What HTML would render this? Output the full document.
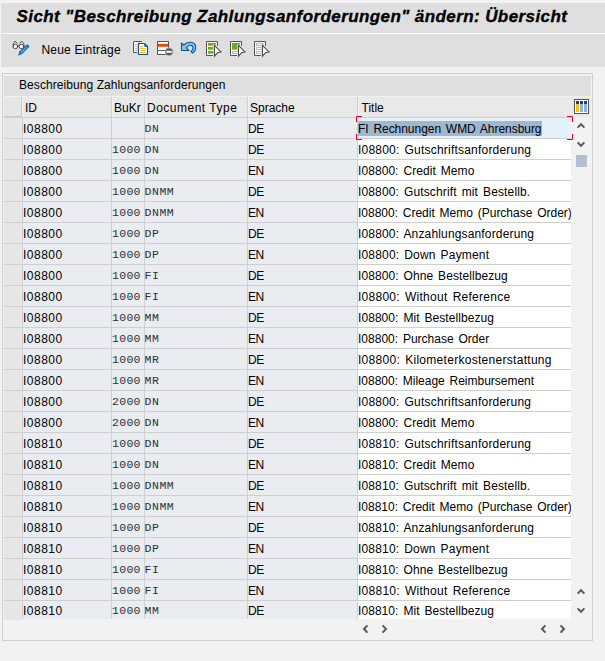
<!DOCTYPE html>
<html lang="de"><head><meta charset="utf-8"><title>Sicht "Beschreibung Zahlungsanforderungen" ändern: Übersicht</title>
<style>
html,body{margin:0;padding:0;}
body{width:605px;height:661px;overflow:hidden;background:#f2f2f2;position:relative;font-family:"Liberation Sans",sans-serif;font-size:12px;color:#000;}
.titlebar{position:absolute;left:1px;top:3px;width:604px;height:30px;background:#dfdfdf;}
.title{position:absolute;left:15.5px;top:2px;-webkit-text-stroke:0.35px #000;font:italic bold 17px "Liberation Sans",sans-serif;white-space:nowrap;line-height:24px;letter-spacing:0.41px;}
.toolbar{position:absolute;left:1px;top:33px;width:604px;height:34px;background:#dfdfdf;border-top:1px solid #fafafa;box-sizing:border-box;}
.tbtext{position:absolute;left:40.5px;top:8px;letter-spacing:0.2px;line-height:16px;font-size:12px;white-space:nowrap;}
.panel{position:absolute;left:2px;top:73px;width:591px;height:568px;box-sizing:border-box;border:1px solid #cfcfcf;background:#f2f2f2;}
.phead{position:absolute;left:1px;top:2px;width:587px;height:20px;background:#dfdfdf;}
.phead span{position:absolute;left:15px;letter-spacing:0.07px;top:1px;line-height:16px;font-size:12px;white-space:nowrap;}
.chead{position:absolute;left:1px;top:22px;width:587px;height:21px;background:#e9e9e9;border-top:1px solid #f1f1f1;box-sizing:border-box;}
.hsel{position:absolute;left:0;top:0;width:17px;height:19px;background:#e6e6e6;border-right:1px solid #c9c9c9;border-bottom:1px solid #cbcbcb;box-sizing:content-box;}
.h{position:absolute;top:0;height:20px;border-right:1px solid #cfcfcf;border-left:1px solid #f3f3f3;box-sizing:border-box;}
.h span{position:absolute;left:1px;top:3px;line-height:16px;font-size:12px;white-space:nowrap;}
.h1{left:18px;width:90px;}
.h1 span{left:2px;}
.h2{left:108px;width:33px;}
.h3{left:141px;width:103px;}
.h4{left:244px;width:110px;}
.h5{left:354px;width:215px;border-right:none;}
.grid{position:absolute;left:1px;top:43px;width:567px;height:503px;overflow:hidden;background:#cfcfcf;}
.row{position:absolute;left:0;height:21px;width:568px;}
.c{position:absolute;top:1px;height:20px;box-sizing:border-box;background:#e9edf1;overflow:hidden;}
.c span{position:absolute;left:1px;top:3px;line-height:16px;font-size:12px;white-space:nowrap;}
.sel0{left:0;width:18px;background:#e6e6e6;}
.c1{left:19px;width:88px;}
.c2{left:108px;width:32px;}
.c3{left:141px;width:102px;}
.c4{left:244px;width:109px;}
.c5{left:354px;width:213px;background:#fff;}
.c2 span,.c3 span{font-family:"Liberation Mono",monospace;font-size:11.5px;letter-spacing:0.3px;}
.c2 span{left:0px;}
.c3 span{left:-0.5px;letter-spacing:0.55px;}
.c2 span,.c3 span{color:#303030;}
.c1 span{left:0px;letter-spacing:0.5px;}
.c4 span{left:0px;letter-spacing:-0.4px;}
.c5 span{left:0px;word-spacing:1.5px;}
.h3 span{letter-spacing:0.5px;}
.h5 span{left:2.5px;}
.first .c5{background:#e5f1fa;}
.c5 span.sel{position:static;padding-top:1px;letter-spacing:inherit;background:#a0b7d0;}
.tbicons{position:absolute;left:-1px;top:0px;}
.cfg{position:absolute;left:570px;top:2px;}
.overlay{position:absolute;left:-3px;top:-74px;pointer-events:none;}
.last .c{height:18px;}
.last .c span{top:2px;}
.last .sel0{height:19px;}
.last::after{content:"";position:absolute;left:18px;top:19px;width:560px;height:3px;background:#f2f2f2;}
</style></head>
<body>
<div class="titlebar"><span class="title">Sicht "Beschreibung Zahlungsanforderungen" ändern: Übersicht</span></div>
<div class="toolbar"><svg class="tbicons" width="300" height="33" viewBox="0 34 300 33">
<!-- display/change: glasses + pencil -->
<g fill="none" stroke="#484848" stroke-width="1" stroke-linecap="round" stroke-linejoin="round">
<ellipse cx="15.4" cy="46.5" rx="2.4" ry="2.2" fill="#fff"/>
<ellipse cx="21.4" cy="46.5" rx="2.4" ry="2.2" fill="#fff"/>
<path d="M17.9 45.6 Q18.6 44.7 19.3 45.6"/>
<path d="M13.2 46.2 L13.4 43.6 L15.3 41.1 L16.9 43.2"/>
<path d="M24 46.2 L23.8 43.6 L21.6 41.1 L20 43.2"/>
</g>
<g>
<path d="M18 55.8 L19.3 51.6 L26.6 44.6 Q27.4 44.1 28.2 44.8 L29 45.7 Q29.6 46.5 29 47.3 L21.9 54.3 Z" fill="#1f72b0"/>
<path d="M20.6 52.2 L26.6 46.4 L27.3 47.1 L21.3 52.9 Z" fill="#86b6dd"/>
</g>
<!-- copy -->
<g>
<rect x="133.5" y="41.5" width="8.5" height="11" fill="#fff"/><path d="M142 41.5 H133.5 V52.5 H137" fill="none" stroke="#555" stroke-width="1"/><path d="M138.5 43.5 H144.5 L147.5 46.5 V54.5 H138.5 Z" fill="#dfdfdf" stroke="#dfdfdf" stroke-width="3" stroke-linejoin="round"/>
<path d="M135 44.5h2.2M135 46.5h2.2M135 48.5h2.2M135 50.5h2.2" stroke="#c4c4c4" stroke-width="1"/>
<path d="M138.5 43.5 H144.5 L147.5 46.5 V54.5 H138.5 Z" fill="#fff" stroke="#0b5a94" stroke-width="1.2" stroke-linejoin="round"/>
<path d="M144.3 43.3 L147.8 46.8 H144.3 Z" fill="#0b5a94"/>
<path d="M140.2 46.5h2.8M140.2 48.5h5.6M140.2 50.5h5.6M140.2 52.5h5.6" stroke="#f8c32e" stroke-width="1.1"/>
</g>
<!-- delete -->
<g>
<rect x="157.5" y="41.5" width="11" height="13" fill="#fff" stroke="#555" stroke-width="1"/>
<rect x="158" y="43.8" width="10" height="3" fill="#d9500a"/>
<path d="M158 50.5h10" stroke="#555" stroke-width="1"/>
<circle cx="169" cy="51.8" r="4" fill="#555" stroke="#dfdfdf" stroke-width="0.6"/>
<rect x="166.3" y="50.8" width="5.4" height="2" fill="#fff"/>
</g>
<!-- undo -->
<g>
<path d="M181.5 43 L183.7 45 C186 42.6 189 42 191.4 42.3 C194.3 42.8 195.9 45.2 195.7 48 C195.5 50.4 194.3 52 192.4 53.1 L191 51.5 C192.4 50.4 193.1 49 193 47.6 C192.9 46 191.7 45.2 190.3 45.2 C188.7 45.2 187.5 46.2 186.5 47.9 L189 50.5 L181.5 50.5 Z" fill="#8fbce2" stroke="#0b5a94" stroke-width="1.1" stroke-linejoin="round"/>
</g>
<!-- select all -->
<g>
<rect x="206.5" y="41.5" width="11" height="14" fill="#fff"/><path d="M217.5 46 V41.5 H206.5 V55.5 H213.0" fill="none" stroke="#555" stroke-width="1"/>
<rect x="208" y="43" width="8" height="2.7" fill="#6aae12"/>
<rect x="208" y="47" width="8" height="2.7" fill="#6aae12"/>
<rect x="208" y="51" width="8" height="2.7" fill="#6aae12"/>
<path d="M214.5 45.4 L221.0 51.9 L217.6 52.8 L214.5 56.1 Z" fill="#dfdfdf" stroke="#dfdfdf" stroke-width="2.8" stroke-linejoin="round"/><path d="M214.5 45.4 L221.0 51.9 L217.6 52.8 L214.5 56.1 Z" fill="#fff" stroke="#4c4c4c" stroke-width="1.1" stroke-linejoin="miter"/>
</g>
<!-- select block -->
<g>
<rect x="230.5" y="41.5" width="11" height="14" fill="#fff"/><path d="M241.5 46 V41.5 H230.5 V55.5 H237.0" fill="none" stroke="#555" stroke-width="1"/>
<rect x="232" y="43" width="8" height="6.7" fill="#6aae12"/>
<rect x="232.5" y="51.5" width="6" height="2" fill="#fff" stroke="#b5b5b5" stroke-width="1"/>
<path d="M238.5 45.4 L245.0 51.9 L241.6 52.8 L238.5 56.1 Z" fill="#dfdfdf" stroke="#dfdfdf" stroke-width="2.8" stroke-linejoin="round"/><path d="M238.5 45.4 L245.0 51.9 L241.6 52.8 L238.5 56.1 Z" fill="#fff" stroke="#4c4c4c" stroke-width="1.1" stroke-linejoin="miter"/>
</g>
<!-- deselect all -->
<g>
<rect x="254.5" y="41.5" width="11" height="14" fill="#fff"/><path d="M265.5 46 V41.5 H254.5 V55.5 H261.0" fill="none" stroke="#555" stroke-width="1"/>
<rect x="256.5" y="43.5" width="7" height="2" fill="#fff" stroke="#bdbdbd" stroke-width="1"/>
<rect x="256.5" y="47.5" width="7" height="2" fill="#fff" stroke="#bdbdbd" stroke-width="1"/>
<rect x="256.5" y="51.5" width="7" height="2" fill="#fff" stroke="#bdbdbd" stroke-width="1"/>
<path d="M262.5 45.4 L269.0 51.9 L265.6 52.8 L262.5 56.1 Z" fill="#dfdfdf" stroke="#dfdfdf" stroke-width="2.8" stroke-linejoin="round"/><path d="M262.5 45.4 L269.0 51.9 L265.6 52.8 L262.5 56.1 Z" fill="#fff" stroke="#4c4c4c" stroke-width="1.1" stroke-linejoin="miter"/>
</g>
</svg>
<span class="tbtext">Neue Einträge</span></div>
<div class="panel">
<div class="phead"><span>Beschreibung Zahlungsanforderungen</span></div>
<div class="chead"><div class="hsel"></div><div class="h h1"><span>ID</span></div><div class="h h2"><span>BuKr</span></div><div class="h h3"><span>Document Type</span></div><div class="h h4"><span>Sprache</span></div><div class="h h5"><span>Title</span></div><svg class="cfg" width="15" height="15" viewBox="0 0 15 15"><rect x="0.5" y="0.5" width="14" height="14" fill="#fff" stroke="#555"/><rect x="2" y="2" width="3" height="3" fill="#1d3f8f"/><rect x="6" y="2" width="3" height="3" fill="#1d3f8f"/><rect x="10" y="2" width="3" height="3" fill="#1d3f8f"/><rect x="2" y="5" width="3" height="8" fill="#fac000"/><rect x="6" y="5" width="3" height="8" fill="#8db3dc"/><rect x="10" y="5" width="3" height="8" fill="#8db3dc"/></svg>
</div>
<div class="grid">
<div class="row first" style="top:0px"><div class="c sel0"></div><div class="c c1"><span>I08800</span></div><div class="c c2"><span></span></div><div class="c c3"><span>DN</span></div><div class="c c4"><span>DE</span></div><div class="c c5"><span style="letter-spacing:-0.039px"><span class="sel">FI Rechnungen WMD Ahrensburg</span></span></div></div>
<div class="row" style="top:21px"><div class="c sel0"></div><div class="c c1"><span>I08800</span></div><div class="c c2"><span>1000</span></div><div class="c c3"><span>DN</span></div><div class="c c4"><span>DE</span></div><div class="c c5"><span style="letter-spacing:0.209px">I08800: Gutschriftsanforderung</span></div></div>
<div class="row" style="top:42px"><div class="c sel0"></div><div class="c c1"><span>I08800</span></div><div class="c c2"><span>1000</span></div><div class="c c3"><span>DN</span></div><div class="c c4"><span>EN</span></div><div class="c c5"><span style="letter-spacing:0.07px">I08800: Credit Memo</span></div></div>
<div class="row" style="top:63px"><div class="c sel0"></div><div class="c c1"><span>I08800</span></div><div class="c c2"><span>1000</span></div><div class="c c3"><span>DNMM</span></div><div class="c c4"><span>DE</span></div><div class="c c5"><span style="letter-spacing:0.137px">I08800: Gutschrift mit Bestellb.</span></div></div>
<div class="row" style="top:84px"><div class="c sel0"></div><div class="c c1"><span>I08800</span></div><div class="c c2"><span>1000</span></div><div class="c c3"><span>DNMM</span></div><div class="c c4"><span>EN</span></div><div class="c c5"><span style="letter-spacing:-0.008px">I08800: Credit Memo (Purchase Order)</span></div></div>
<div class="row" style="top:105px"><div class="c sel0"></div><div class="c c1"><span>I08800</span></div><div class="c c2"><span>1000</span></div><div class="c c3"><span>DP</span></div><div class="c c4"><span>DE</span></div><div class="c c5"><span style="letter-spacing:0.155px">I08800: Anzahlungsanforderung</span></div></div>
<div class="row" style="top:126px"><div class="c sel0"></div><div class="c c1"><span>I08800</span></div><div class="c c2"><span>1000</span></div><div class="c c3"><span>DP</span></div><div class="c c4"><span>EN</span></div><div class="c c5"><span style="letter-spacing:0.172px">I08800: Down Payment</span></div></div>
<div class="row" style="top:147px"><div class="c sel0"></div><div class="c c1"><span>I08800</span></div><div class="c c2"><span>1000</span></div><div class="c c3"><span>FI</span></div><div class="c c4"><span>DE</span></div><div class="c c5"><span style="letter-spacing:0.081px">I08800: Ohne Bestellbezug</span></div></div>
<div class="row" style="top:168px"><div class="c sel0"></div><div class="c c1"><span>I08800</span></div><div class="c c2"><span>1000</span></div><div class="c c3"><span>FI</span></div><div class="c c4"><span>EN</span></div><div class="c c5"><span style="letter-spacing:0.265px">I08800: Without Reference</span></div></div>
<div class="row" style="top:189px"><div class="c sel0"></div><div class="c c1"><span>I08800</span></div><div class="c c2"><span>1000</span></div><div class="c c3"><span>MM</span></div><div class="c c4"><span>DE</span></div><div class="c c5"><span style="letter-spacing:0.065px">I08800: Mit Bestellbezug</span></div></div>
<div class="row" style="top:210px"><div class="c sel0"></div><div class="c c1"><span>I08800</span></div><div class="c c2"><span>1000</span></div><div class="c c3"><span>MM</span></div><div class="c c4"><span>EN</span></div><div class="c c5"><span style="letter-spacing:0.006px">I08800: Purchase Order</span></div></div>
<div class="row" style="top:231px"><div class="c sel0"></div><div class="c c1"><span>I08800</span></div><div class="c c2"><span>1000</span></div><div class="c c3"><span>MR</span></div><div class="c c4"><span>DE</span></div><div class="c c5"><span style="letter-spacing:0.288px">I08800: Kilometerkostenerstattung</span></div></div>
<div class="row" style="top:252px"><div class="c sel0"></div><div class="c c1"><span>I08800</span></div><div class="c c2"><span>1000</span></div><div class="c c3"><span>MR</span></div><div class="c c4"><span>EN</span></div><div class="c c5"><span style="letter-spacing:-0.012px">I08800: Mileage Reimbursement</span></div></div>
<div class="row" style="top:273px"><div class="c sel0"></div><div class="c c1"><span>I08800</span></div><div class="c c2"><span>2000</span></div><div class="c c3"><span>DN</span></div><div class="c c4"><span>DE</span></div><div class="c c5"><span style="letter-spacing:0.209px">I08800: Gutschriftsanforderung</span></div></div>
<div class="row" style="top:294px"><div class="c sel0"></div><div class="c c1"><span>I08800</span></div><div class="c c2"><span>2000</span></div><div class="c c3"><span>DN</span></div><div class="c c4"><span>EN</span></div><div class="c c5"><span style="letter-spacing:0.07px">I08800: Credit Memo</span></div></div>
<div class="row" style="top:315px"><div class="c sel0"></div><div class="c c1"><span>I08810</span></div><div class="c c2"><span>1000</span></div><div class="c c3"><span>DN</span></div><div class="c c4"><span>DE</span></div><div class="c c5"><span style="letter-spacing:0.209px">I08810: Gutschriftsanforderung</span></div></div>
<div class="row" style="top:336px"><div class="c sel0"></div><div class="c c1"><span>I08810</span></div><div class="c c2"><span>1000</span></div><div class="c c3"><span>DN</span></div><div class="c c4"><span>EN</span></div><div class="c c5"><span style="letter-spacing:0.07px">I08810: Credit Memo</span></div></div>
<div class="row" style="top:357px"><div class="c sel0"></div><div class="c c1"><span>I08810</span></div><div class="c c2"><span>1000</span></div><div class="c c3"><span>DNMM</span></div><div class="c c4"><span>DE</span></div><div class="c c5"><span style="letter-spacing:0.137px">I08810: Gutschrift mit Bestellb.</span></div></div>
<div class="row" style="top:378px"><div class="c sel0"></div><div class="c c1"><span>I08810</span></div><div class="c c2"><span>1000</span></div><div class="c c3"><span>DNMM</span></div><div class="c c4"><span>EN</span></div><div class="c c5"><span style="letter-spacing:-0.008px">I08810: Credit Memo (Purchase Order)</span></div></div>
<div class="row" style="top:399px"><div class="c sel0"></div><div class="c c1"><span>I08810</span></div><div class="c c2"><span>1000</span></div><div class="c c3"><span>DP</span></div><div class="c c4"><span>DE</span></div><div class="c c5"><span style="letter-spacing:0.155px">I08810: Anzahlungsanforderung</span></div></div>
<div class="row" style="top:420px"><div class="c sel0"></div><div class="c c1"><span>I08810</span></div><div class="c c2"><span>1000</span></div><div class="c c3"><span>DP</span></div><div class="c c4"><span>EN</span></div><div class="c c5"><span style="letter-spacing:0.172px">I08810: Down Payment</span></div></div>
<div class="row" style="top:441px"><div class="c sel0"></div><div class="c c1"><span>I08810</span></div><div class="c c2"><span>1000</span></div><div class="c c3"><span>FI</span></div><div class="c c4"><span>DE</span></div><div class="c c5"><span style="letter-spacing:0.081px">I08810: Ohne Bestellbezug</span></div></div>
<div class="row" style="top:462px"><div class="c sel0"></div><div class="c c1"><span>I08810</span></div><div class="c c2"><span>1000</span></div><div class="c c3"><span>FI</span></div><div class="c c4"><span>EN</span></div><div class="c c5"><span style="letter-spacing:0.265px">I08810: Without Reference</span></div></div>
<div class="row last" style="top:483px"><div class="c sel0"></div><div class="c c1"><span>I08810</span></div><div class="c c2"><span>1000</span></div><div class="c c3"><span>MM</span></div><div class="c c4"><span>DE</span></div><div class="c c5"><span style="letter-spacing:0.065px">I08810: Mit Bestellbezug</span></div></div>
</div>
<svg class="overlay" width="605" height="661" viewBox="0 0 605 661">
<g fill="none" stroke="#e2001a" stroke-width="1">
<path d="M356.5 122 V116.5 H362"/><path d="M356.5 134 V139.5 H362"/>
<path d="M572.5 122 V116.5 H567"/><path d="M572.5 134 V139.5 H567"/>
</g>
<g fill="none" stroke="#5a5a5a" stroke-width="2" stroke-linecap="butt" stroke-linejoin="miter">
<path d="M577.6 127.6 L581 124.2 L584.4 127.6"/>
<path d="M577.6 142.4 L581 145.8 L584.4 142.4"/>
<path d="M577.6 593.6 L581 590.2 L584.4 593.6"/>
<path d="M577.6 608.4 L581 611.8 L584.4 608.4"/>
<path d="M367.4 625.4 L364 629 L367.4 632.6"/>
<path d="M382.6 625.4 L386 629 L382.6 632.6"/>
<path d="M545.4 625.4 L542 629 L545.4 632.6"/>
<path d="M560.6 625.4 L564 629 L560.6 632.6"/>
</g>
<rect x="576" y="155" width="11" height="12" fill="#b4c0cf"/>
</svg>
</div>
</body></html>
